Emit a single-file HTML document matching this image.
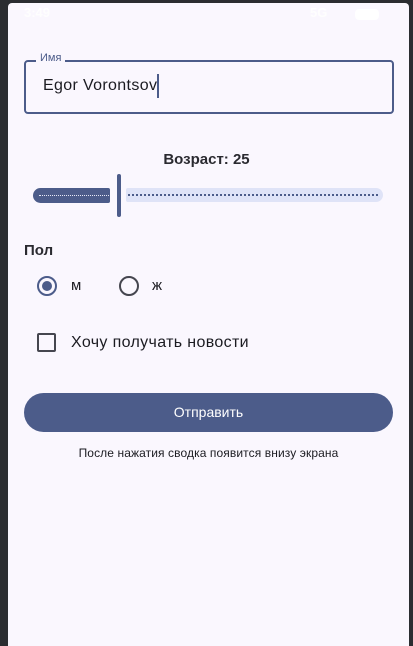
<!DOCTYPE html>
<html><head><meta charset="utf-8"><style>
html,body{margin:0;padding:0;width:413px;height:646px;overflow:hidden;background:#2b2d31;font-family:"Liberation Sans","DejaVu Sans",sans-serif;}
.scr{position:absolute;left:8px;top:3px;width:401px;height:643px;background:#faf7fe;border-radius:4px 4px 0 0;}
.a{position:absolute;}
</style></head><body>
<div class="scr"></div>
<div class="a" style="left:24px;top:5px;color:#fff;font-size:13px;font-weight:bold;opacity:.9">3:49</div>
<div class="a" style="left:310px;top:5px;color:#fff;font-size:13px;font-weight:bold;opacity:.9">5G</div>
<div class="a" style="left:355px;top:9px;width:24px;height:11px;background:#fff;border-radius:4px;opacity:.9"></div>

<div class="a" style="left:24px;top:60px;width:366px;height:50px;border:2px solid #4c5c8a;border-radius:4px"></div>
<div class="a" style="left:36px;top:51px;padding:0 4px;background:#faf7fe;color:#4c5c8a;font-size:11px;line-height:14px">Имя</div>
<div class="a" style="left:43px;top:76px;color:#1b1b21;font-size:16px;line-height:20px;letter-spacing:0.35px">Egor Vorontsov</div>
<div class="a" style="left:157px;top:74px;width:2px;height:24px;background:#4c5c8a"></div>

<div class="a" style="left:0;width:413px;top:151px;text-align:center;color:#2a2a30;font-size:15px;font-weight:bold;line-height:18px">Возраст: 25</div>
<div class="a" style="left:33px;top:188px;width:77px;height:15px;background:#4c5c8a;border-radius:8px 2px 2px 8px"></div>
<div class="a" style="left:39px;top:195px;width:70px;height:0;border-top:1px dotted #e8eaf8"></div>
<div class="a" style="left:117px;top:174px;width:4px;height:43px;background:#4c5c8a;border-radius:2px"></div>
<div class="a" style="left:126px;top:188px;width:257px;height:14px;background:#dfe3f7;border-radius:2px 7px 7px 2px"></div>
<div class="a" style="left:128px;top:194px;width:250px;height:0;border-top:2px dotted #4c5c8a"></div>

<div class="a" style="left:24px;top:242px;color:#2a2a30;font-size:15px;font-weight:bold;line-height:18px">Пол</div>
<div class="a" style="left:37px;top:276px;width:16px;height:16px;border:2px solid #4c5c8a;border-radius:50%"></div>
<div class="a" style="left:42px;top:281px;width:10px;height:10px;background:#4c5c8a;border-radius:50%"></div>
<div class="a" style="left:71px;top:277px;color:#1b1b21;font-size:15px;line-height:18px">м</div>
<div class="a" style="left:119px;top:276px;width:16px;height:16px;border:2px solid #45464f;border-radius:50%"></div>
<div class="a" style="left:152px;top:277px;color:#1b1b21;font-size:15px;line-height:18px">ж</div>

<div class="a" style="left:37px;top:333px;width:15px;height:15px;border:2px solid #45464f;border-radius:2px"></div>
<div class="a" style="left:71px;top:333px;color:#1b1b21;font-size:16px;line-height:20px;letter-spacing:0.35px">Хочу получать новости</div>

<div class="a" style="left:24px;top:393px;width:369px;height:39px;background:#4c5c8a;border-radius:20px;color:#fff;font-size:14px;line-height:39px;text-align:center">Отправить</div>
<div class="a" style="left:0;width:417px;top:446px;text-align:center;color:#1b1b21;font-size:12px;line-height:14px;letter-spacing:0.1px">После нажатия сводка появится внизу экрана</div>
</body></html>
